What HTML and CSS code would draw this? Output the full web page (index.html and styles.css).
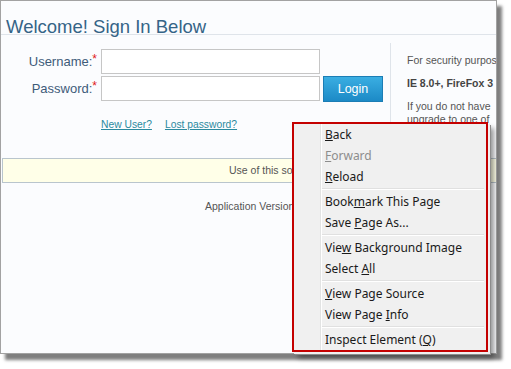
FILE: index.html
```html
<!DOCTYPE html>
<html>
<head>
<meta charset="utf-8">
<link rel="stylesheet" href="styles.css">
</head>
<body>
<div class="shot">
  <div class="page">
    <h1 class="title">Welcome! Sign In Below</h1>
    <div class="main">
      <div class="login">
        <div class="form">
          <label class="lbl">Username:<span class="req">*</span></label>
          <input class="field" type="text">
          <span></span>
          <label class="lbl">Password:<span class="req">*</span></label>
          <input class="field" type="password">
          <button class="btn">Login</button>
        </div>
        <div class="links"><a href="#">New User?</a><a href="#">Lost password?</a></div>
      </div>
      <div class="info">
        <p>For security purposes</p>
        <p class="strong">IE 8.0+, FireFox 3</p>
        <p>If you do not have<br>upgrade to one of</p>
      </div>
    </div>
    <div class="notice">Use of this software is restricted</div>
    <div class="version">Application Version 4.2 Copyright</div>
  </div>
  <div class="menu">
    <div class="item"><u>B</u>ack</div>
    <div class="item off"><u>F</u>orward</div>
    <div class="item"><u>R</u>eload</div>
    <div class="sep"></div>
    <div class="item">Book<u>m</u>ark This Page</div>
    <div class="item">Save <u>P</u>age As...</div>
    <div class="sep"></div>
    <div class="item">Vie<u>w</u> Background Image</div>
    <div class="item">Select <u>A</u>ll</div>
    <div class="sep"></div>
    <div class="item"><u>V</u>iew Page Source</div>
    <div class="item">View Page <u>I</u>nfo</div>
    <div class="sep"></div>
    <div class="item">Inspect Element (<u>Q</u>)</div>
  </div>
</div>
</body>
</html>
```
FILE: styles.css
```css
* { box-sizing: border-box; }
html, body { margin: 0; padding: 0; background: #ffffff; }
body { width: 511px; height: 369px; overflow: hidden; }

.shot {
  position: relative;
  width: 497px;
  height: 354px;
  border: 1px solid #a2a2a2;
  background: #fbfcfe;
  box-shadow: 5px 6px 3px rgba(0,0,0,0.5);
}
.page {
  width: 495px;
  height: 352px;
  overflow: hidden;
  font-family: "Liberation Sans", Arial, sans-serif;
}
.title {
  margin: 0;
  height: 34px;
  padding: 18px 0 0 5px;
  line-height: 16px;
  font-size: 18.5px;
  font-weight: normal;
  color: #356487;
  border-bottom: 1px solid #dfe4ea;
  white-space: nowrap;
}
.main {
  display: flex;
  padding-top: 8px;
}
.login {
  flex: 0 0 390px;
  border-right: 1px solid #dfe4ea;
  padding: 6px 0 15px 0;
}
.form {
  display: grid;
  grid-template-columns: 97px 219px 60px;
  grid-auto-rows: 25px;
  column-gap: 3px;
  row-gap: 2px;
  align-items: center;
}
.lbl {
  text-align: right;
  padding-right: 1px;
  font-size: 13px;
  color: #3e5b79;
  white-space: nowrap;
}
.req { color: #e01818; position: relative; top: -3px; font-size: 12px; }
.field {
  height: 25px;
  width: 219px;
  margin: 0;
  border: 1px solid #c6c6c6;
  background: #ffffff;
}
.btn {
  align-self: start;
  height: 26px;
  width: 60px;
  margin: 0;
  padding: 0;
  border: 1px solid #1b7db5;
  background: linear-gradient(#3aaee2, #1c8ac6);
  color: #ffffff;
  font-family: "Liberation Sans", Arial, sans-serif;
  font-size: 12.5px;
}
.links {
  display: flex;
  gap: 13px;
  padding-left: 100px;
  margin-top: 17px;
  font-size: 10.3px;
  line-height: 13px;
}
.links a { color: #2b8a9f; text-decoration: underline; }
.info {
  flex: 1;
  min-width: 0;
  overflow: hidden;
  padding-left: 16px;
  padding-top: 11px;
  font-size: 10.5px;
  line-height: 13px;
  color: #555555;
  white-space: nowrap;
}
.info p { margin: 0 0 10px 0; }
.info .strong { font-weight: bold; color: #444444; }
.notice {
  margin: 12px 0 0 1px;
  height: 25px;
  border: 1px solid #b9c5cd;
  border-right: 0;
  background: #ffffe8;
  padding-left: 226px;
  line-height: 23px;
  font-size: 10.5px;
  color: #555555;
  white-space: nowrap;
  overflow: hidden;
}
.version {
  margin-top: 17px;
  padding-left: 204px;
  font-size: 10.5px;
  line-height: 13px;
  color: #555555;
  white-space: nowrap;
  overflow: hidden;
}

.menu {
  position: absolute;
  left: 291px;
  top: 121px;
  width: 196px;
  height: 230px;
  border: 2px solid #c40000;
  background: #f0f0f0 linear-gradient(90deg, transparent 26px, #e2e3e3 26px, #e2e3e3 27px, #ffffff 27px, #ffffff 28px, transparent 28px);
  box-shadow: 2px 2px 0 0 #f0f0f0, 3px 3px 0 0 #8c8c8c, 6px 6px 5px rgba(0,0,0,0.4);
  font-family: "Noto Sans", "Open Sans", sans-serif;
  font-size: 12px;
  color: #1a1a1a;
}
.item {
  height: 21px;
  line-height: 21px;
  padding-left: 31px;
  white-space: nowrap;
}
.item.off { color: #8d8d8d; }
.item u { text-decoration: underline; text-underline-offset: 1px; }
.sep {
  height: 4px;
  margin: 0 2px 0 28px;
  border-top: 1px solid transparent;
}
.sep::before {
  content: "";
  display: block;
  height: 1px;
  background: #e0e0e0;
  border-bottom: 1px solid #ffffff;
  box-sizing: content-box;
}
```
